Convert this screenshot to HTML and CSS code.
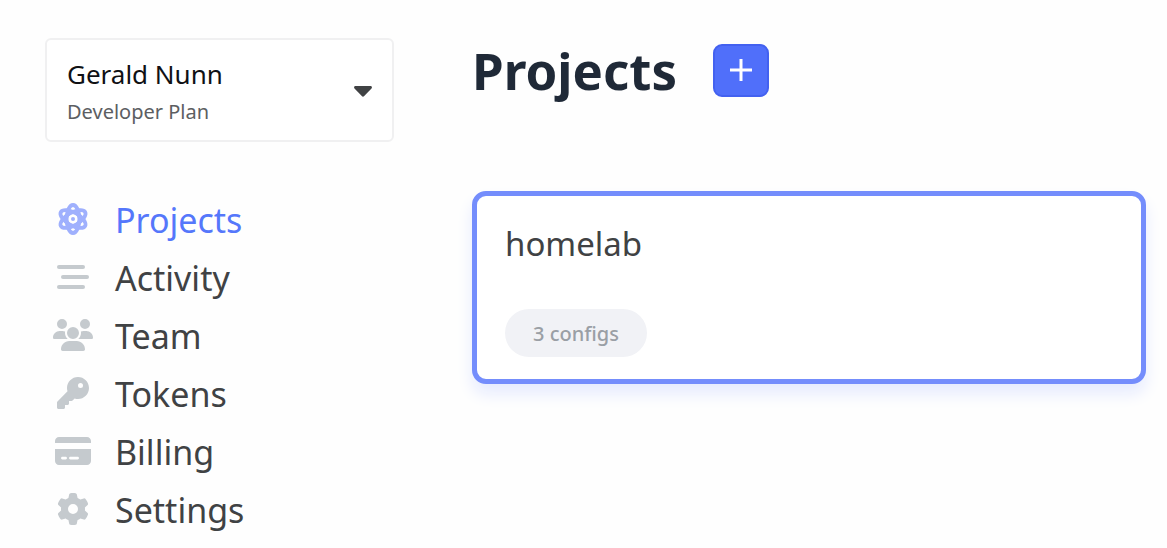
FILE: index.html
```html
<!DOCTYPE html>
<html lang="en">
<head>
<meta charset="utf-8">
<meta name="viewport" content="width=device-width, initial-scale=1">
<title>Projects</title>
<link rel="stylesheet" href="styles.css">
</head>
<body>
<div class="app">
  <aside class="sidebar">
    <button class="account" type="button" aria-haspopup="menu">
      <span class="account-text">
        <span class="account-name">Gerald Nunn</span>
        <span class="account-plan">Developer Plan</span>
      </span>
      <svg class="caret" viewBox="0 0 18 11" aria-hidden="true"><path d="M1.5 0h15c1.300 0 1.900 1.500 1 2.400l-7.300 7.700c-.7.700-1.700.700-2.400 0L.5 2.400C-.4 1.500.2 0 1.500 0z"/></svg>
    </button>
    <nav class="nav" aria-label="Main">
      <a class="nav-item nav-item-active" href="#projects" aria-current="page">
        <svg class="nav-icon" viewBox="0 0 40 32" aria-hidden="true">
          <g fill="none" stroke="currentColor" stroke-width="3.800">
            <ellipse cx="20" cy="16" rx="6.400" ry="14"/>
            <ellipse cx="20" cy="16" rx="6.400" ry="14" transform="rotate(60 20 16)"/>
            <ellipse cx="20" cy="16" rx="6.400" ry="14" transform="rotate(120 20 16)"/>
            <circle cx="20" cy="16" r="7"/>
          </g>
          <circle cx="20" cy="16" r="2" fill="currentColor"/>
        </svg>
        <span class="nav-label">Projects</span>
      </a>
      <a class="nav-item" href="#activity">
        <svg class="nav-icon" viewBox="-64 0 640 512" aria-hidden="true"><rect x="0" y="64" width="448" height="64" rx="32"/><rect x="64" y="224" width="448" height="64" rx="32"/><rect x="0" y="384" width="448" height="64" rx="32"/></svg>
        <span class="nav-label">Activity</span>
      </a>
      <a class="nav-item" href="#team">
        <svg class="nav-icon" viewBox="0 0 640 512" aria-hidden="true"><path d="M144 0a80 80 0 1 1 0 160A80 80 0 1 1 144 0zM512 0a80 80 0 1 1 0 160A80 80 0 1 1 512 0zM0 298.7C0 239.8 47.8 192 106.7 192h42.7c15.9 0 31 3.5 44.6 9.7c-1.3 7.2-1.9 14.7-1.9 22.3c0 38.2 16.8 72.5 43.3 96c-.2 0-.4 0-.7 0H21.3C9.6 320 0 310.4 0 298.7zM405.3 320c-.2 0-.4 0-.7 0c26.6-23.5 43.3-57.8 43.3-96c0-7.6-.7-15-1.9-22.3c13.6-6.3 28.7-9.7 44.6-9.7h42.7C592.2 192 640 239.8 640 298.7c0 11.8-9.6 21.3-21.3 21.3H405.3zM224 224a96 96 0 1 1 192 0 96 96 0 1 1-192 0zM128 485.3C128 411.7 187.7 352 261.3 352H378.7C452.3 352 512 411.7 512 485.3c0 14.7-11.9 26.7-26.7 26.7H154.7c-14.7 0-26.7-11.9-26.7-26.7z"/></svg>
        <span class="nav-label">Team</span>
      </a>
      <a class="nav-item" href="#tokens">
        <svg class="nav-icon" viewBox="-64 0 640 512" aria-hidden="true"><path d="M336 352c97.2 0 176-78.8 176-176S433.2 0 336 0S160 78.8 160 176c0 18.7 2.9 36.8 8.3 53.7L7 391c-4.5 4.5-7 10.6-7 17v80c0 13.3 10.7 24 24 24h80c13.3 0 24-10.7 24-24V448h40c13.3 0 24-10.7 24-24V384h40c6.4 0 12.5-2.5 17-7l33.3-33.3c16.9 5.4 35 8.3 53.7 8.3zM376 96a40 40 0 1 1 0 80 40 40 0 1 1 0-80z"/></svg>
        <span class="nav-label">Tokens</span>
      </a>
      <a class="nav-item" href="#billing">
        <svg class="nav-icon" viewBox="-32 0 640 512" aria-hidden="true"><path fill-rule="evenodd" d="M64 32C28.700 32 0 60.700 0 96v32h576V96c0-35.300-28.700-64-64-64H64zM0 224v192c0 35.300 28.700 64 64 64h448c35.300 0 64-28.700 64-64V224H0zM118 346h52c12 0 22 10 22 22s-10 22-22 22h-52c-12 0-22-10-22-22s10-22 22-22zM246 346h116c12 0 22 10 22 22s-10 22-22 22H246c-12 0-22-10-22-22s10-22 22-22z"/></svg>
        <span class="nav-label">Billing</span>
      </a>
      <a class="nav-item" href="#settings">
        <svg class="nav-icon" viewBox="-64 0 640 512" aria-hidden="true"><path d="M495.9 166.6c3.2 8.7 .5 18.4-6.4 24.6l-43.3 39.4c1.1 8.3 1.7 16.8 1.7 25.4s-.6 17.1-1.7 25.4l43.3 39.4c6.9 6.2 9.6 15.9 6.4 24.6c-4.4 11.9-9.7 23.3-15.8 34.3l-4.7 8.1c-6.6 11-14 21.4-22.1 31.2c-5.900 7.200-15.700 9.600-24.500 6.800l-55.700-17.700c-13.400 10.300-28.200 18.900-44 25.400l-12.500 57.100c-2 9.100-9 16.300-18.200 17.800c-13.800 2.300-28 3.500-42.500 3.500s-28.700-1.200-42.500-3.500c-9.200-1.500-16.200-8.700-18.200-17.800l-12.500-57.100c-15.800-6.500-30.600-15.100-44-25.400L83.100 425.900c-8.800 2.800-18.600 .3-24.500-6.800c-8.100-9.800-15.500-20.200-22.100-31.200l-4.700-8.100c-6.100-11-11.400-22.400-15.800-34.300c-3.200-8.700-.5-18.400 6.400-24.600l43.300-39.400C64.600 273.100 64 264.600 64 256s.6-17.100 1.700-25.400L22.400 191.200c-6.900-6.200-9.600-15.900-6.400-24.600c4.400-11.900 9.700-23.300 15.800-34.300l4.700-8.100c6.600-11 14-21.400 22.100-31.200c5.900-7.200 15.700-9.600 24.500-6.800l55.700 17.700c13.400-10.300 28.200-18.900 44-25.400l12.500-57.100c2-9.100 9-16.300 18.200-17.800C227.300 1.200 241.500 0 256 0s28.700 1.200 42.500 3.500c9.200 1.500 16.200 8.700 18.200 17.800l12.500 57.100c15.800 6.500 30.600 15.100 44 25.400l55.700-17.700c8.800-2.800 18.600-.3 24.500 6.800c8.100 9.800 15.500 20.200 22.100 31.200l4.700 8.100c6.100 11 11.400 22.400 15.800 34.300zM256 336a80 80 0 1 0 0-160 80 80 0 1 0 0 160z"/></svg>
        <span class="nav-label">Settings</span>
      </a>
    </nav>
  </aside>
  <main class="content">
    <header class="page-head">
      <h1 class="title">Projects</h1>
      <button class="add" type="button" aria-label="Create project">
        <svg class="add-icon" viewBox="0 0 24 24" aria-hidden="true"><path d="M12 1v22M1 12h22"/></svg>
      </button>
    </header>
    <a class="card" href="#homelab">
      <span class="card-name">homelab</span>
      <span class="badge">3 configs</span>
    </a>
  </main>
</div>
</body>
</html>
```
FILE: styles.css
```css
* {
  box-sizing: border-box;
}

body {
  margin: 0;
  background: #fefefe;
  color: #404244;
  font-family: "Noto Sans", "Open Sans", sans-serif;
}

.app {
  display: grid;
  grid-template-columns: minmax(280px, 349px) minmax(0, 1fr);
  column-gap: 78px;
  padding: 38px 21px 0 45px;
}

.account {
  display: flex;
  align-items: center;
  justify-content: space-between;
  width: 100%;
  padding: 16px 20px 14px;
  border: 2px solid #f0f0f1;
  border-radius: 6px;
  background: #fff;
  font: inherit;
  text-align: left;
  cursor: pointer;
}

.account-text {
  display: flex;
  flex-direction: column;
  gap: 6px;
}

.account-name {
  color: #101114;
  font-size: 26px;
  line-height: 36px;
}

.account-plan {
  color: #5c5e62;
  font-size: 20px;
  line-height: 28px;
}

.caret {
  width: 18px;
  height: 11px;
  fill: #404244;
}

.nav {
  display: flex;
  flex-direction: column;
  margin-top: 48px;
  padding-left: 8px;
}

.nav-item {
  display: flex;
  align-items: center;
  gap: 22px;
  height: 58px;
  color: #404244;
  font-size: 34px;
  line-height: 54px;
  text-decoration: none;
}

.nav-label {
  padding-top: 2px;
}

.nav-icon {
  width: 40px;
  height: 32px;
  color: #c5cace;
  fill: currentColor;
}

.nav-item-active {
  color: #5577fb;
}

.nav-item-active .nav-icon {
  color: #9fb0fd;
}

.page-head {
  display: flex;
  align-items: center;
  gap: 36px;
  height: 64px;
}

.title {
  margin: 0;
  color: #1f2937;
  font-size: 51px;
  line-height: 64px;
}

.add {
  display: grid;
  place-items: center;
  width: 56px;
  height: 53px;
  padding: 0;
  border: 2px solid #4361f0;
  border-radius: 9px;
  background: #506ffa;
  cursor: pointer;
}

.add-icon {
  width: 24px;
  height: 24px;
  fill: none;
  stroke: #fff;
  stroke-width: 3;
}

.card {
  display: flex;
  flex-direction: column;
  align-items: flex-start;
  gap: 41px;
  margin-top: 89px;
  padding: 24px 28px 22px;
  border: 5px solid #748dfc;
  border-radius: 14px;
  background: #fff;
  box-shadow: 0 10px 16px #e6ebfe;
  color: #404244;
  text-decoration: none;
}

.card-name {
  font-size: 33px;
  line-height: 48px;
}

.badge {
  padding: 2px 28px 0;
  border-radius: 24px;
  background: #f1f2f6;
  color: #9a9fa5;
  font-size: 20px;
  font-weight: 500;
  line-height: 46px;
}
```
